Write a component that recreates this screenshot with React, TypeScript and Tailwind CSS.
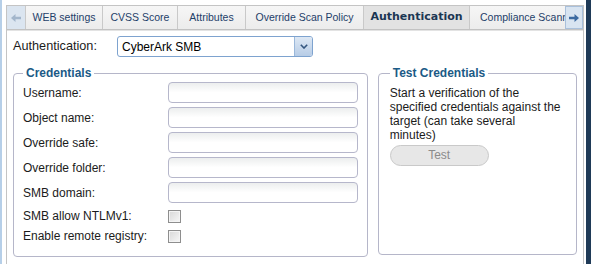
import React from 'react';

const tabs = [
  { label: 'WEB settings', w: 'w-[77px]' },
  { label: 'CVSS Score', w: 'w-[75px]' },
  { label: 'Attributes', w: 'w-[68px]' },
  { label: 'Override Scan Policy', w: 'w-[118px]' },
  { label: 'Authentication', w: 'w-[106px]', active: true },
];

const textFields = ['Username:', 'Object name:', 'Override safe:', 'Override folder:', 'SMB domain:'];
const checkFields = ['SMB allow NTLMv1:', 'Enable remote registry:'];

function Arrow({ dir, color }: { dir: 'left' | 'right'; color: string }) {
  return (
    <svg width="10" height="8" viewBox="0 0 10 8" className={dir === 'right' ? 'rotate-180' : ''}>
      <path d="M0 4 L4.5 0 V2.8 H10 V5.2 H4.5 V8 Z" fill={color} />
    </svg>
  );
}

function TextInput() {
  return (
    <div className="h-[21px] w-[190px] rounded-[4px] border border-[#b6b7cb] bg-gradient-to-b from-[#eceeee] via-white to-white" />
  );
}

function Checkbox() {
  return (
    <div className="h-[13px] w-[13px] border border-[#8e8e8e] bg-gradient-to-br from-[#d8d8d8] to-[#f7f7f7] shadow-[inset_0_0_0_1px_#f4f4f4]" />
  );
}

export default function App() {
  return (
    <div className="flex h-[264px] w-[591px] overflow-hidden bg-white font-['Liberation_Sans',Arial,sans-serif] text-[#1b1b1b]">
      <div className="w-[2px] bg-[#b6cfe8]" />
      <div className="ml-[4px] mt-[5px] flex w-[578px] flex-col border-x border-t border-[#c4c4c4]">
        {/* tab strip */}
        <div className="flex h-[24px] border-b border-[#c2c2c2]">
          <div className="flex w-[18px] items-center justify-center bg-[#dbe5f0]">
            <Arrow dir="left" color="#a3b6cb" />
          </div>
          <div className="flex flex-1 overflow-hidden">
            {tabs.map((t) => (
              <div
                key={t.label}
                className={`flex shrink-0 items-center justify-center border-l border-[#c9c9c9] ${t.w} ${
                  t.active
                    ? "bg-[#e2e2e2] font-['DejaVu_Sans',sans-serif] text-[11px] font-bold text-[#1b3653]"
                    : 'bg-gradient-to-b from-[#f6f6f6] to-[#ececec] text-[10.5px] text-[#1e4069]'
                }`}
              >
                {t.label}
              </div>
            ))}
            <div className="flex w-[124px] shrink-0 items-center border-l border-[#c9c9c9] bg-gradient-to-b from-[#f6f6f6] to-[#ececec] pl-[10px] text-[10.5px] whitespace-nowrap text-[#1e4069]">
              Compliance Scanning
            </div>
          </div>
          <div className="flex w-[18px] items-center justify-center border border-[#a9c0db] bg-[#d8e4f1]">
            <Arrow dir="right" color="#3c6aa1" />
          </div>
        </div>
        <div className="h-[1px] bg-[#e3e3e3]" />

        {/* content */}
        <div className="flex flex-col px-[6px] pt-[5px]">
          <div className="flex items-center">
            <span className="w-[104px] text-[12.7px]">Authentication:</span>
            <div className="flex h-[21px] w-[196px] items-center overflow-hidden rounded-[3px] border border-[#7ea3cf] bg-white">
              <span className="flex-1 pl-[4px] text-[12px] text-black">CyberArk SMB</span>
              <div className="flex h-full w-[18px] items-center justify-center border-l border-[#9bb8da] bg-gradient-to-b from-[#dde8f4] to-[#b7cce6]">
                <svg width="8" height="5" viewBox="0 0 8 5">
                  <path d="M0.8 0.8 L4 4 L7.2 0.8" fill="none" stroke="#34567f" strokeWidth="1.6" />
                </svg>
              </div>
            </div>
          </div>

          <div className="mt-[7px] flex gap-[10px]">
            <fieldset className="h-[193px] w-[356px] rounded-[4px] border border-[#b5b6c9] pl-[9px]">
              <legend className="px-[3px] text-[12px] font-bold text-[#1b5a86]">Credentials</legend>
              <div className="flex flex-col gap-[4px]">
                {textFields.map((f) => (
                  <div key={f} className="flex items-center">
                    <span className="w-[145px] text-[12px]">{f}</span>
                    <TextInput />
                  </div>
                ))}
              </div>
              <div className="mt-[3px] flex flex-col">
                {checkFields.map((f) => (
                  <div key={f} className="flex h-[20px] items-center">
                    <span className="w-[145px] text-[12px]">{f}</span>
                    <Checkbox />
                  </div>
                ))}
              </div>
            </fieldset>

            <fieldset className="h-[191px] w-[200px] rounded-[4px] border border-[#b5b6c9] pl-[11px] pt-[4px]">
              <legend className="px-[3px] text-[12px] font-bold text-[#1b5a86]">Test Credentials</legend>
              <p className="text-[12px] leading-[14px]">
                Start a verification of the
                <br />
                specified credentials against the
                <br />
                target (can take several
                <br />
                minutes)
              </p>
              <button className="mt-[2px] h-[21px] w-[99px] rounded-full border border-[#c9c9c9] bg-[#e7e7e7] text-[12px] text-[#8b8b8b]">
                Test
              </button>
            </fieldset>
          </div>
        </div>
      </div>
      <div className="ml-[2px] w-[5px] bg-[#1f3a57]" />
    </div>
  );
}
